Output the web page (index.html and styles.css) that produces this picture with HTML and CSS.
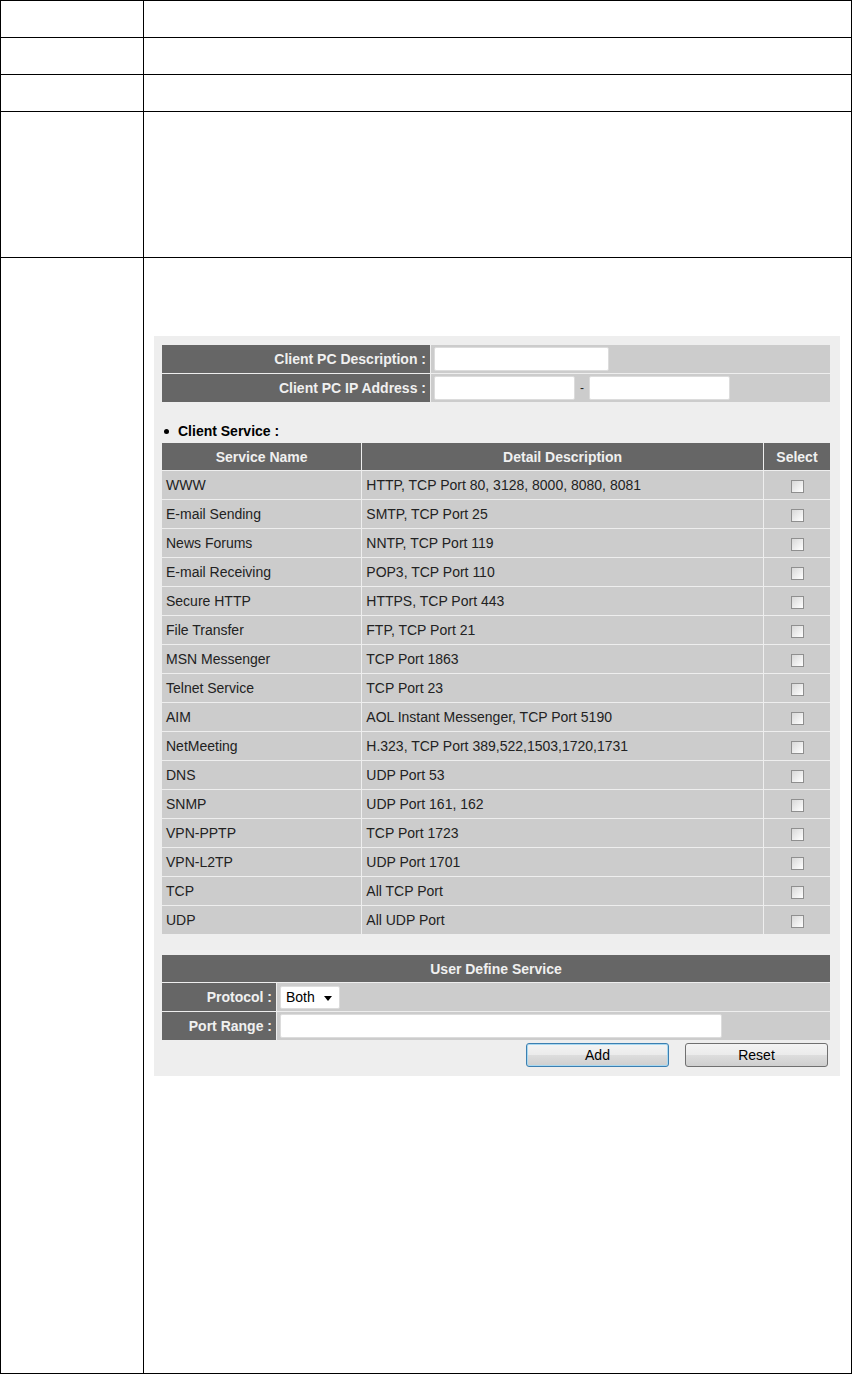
FILE: index.html
```html
<!DOCTYPE html>
<html lang="en">
  <head>
    <meta charset="UTF-8" />
    <title>Access Control</title>
    <link rel="stylesheet" href="styles.css">
  </head>
  <body>
    <table class="doc">
      <tr class="r1"><td class="key"></td><td></td></tr>
      <tr class="r2"><td class="key"></td><td></td></tr>
      <tr class="r3"><td class="key"></td><td></td></tr>
      <tr class="r4"><td class="key"></td><td></td></tr>
      <tr class="r5">
        <td class="key"></td>
        <td class="shot">
          <div class="panel">
            <!-- Client PC -->
            <table class="form top-form">
              <tr>
                <td class="label wide">Client PC Description :</td>
                <td class="value"><input type="text" class="txt desc" /></td>
              </tr>
              <tr>
                <td class="label wide">Client PC IP Address :</td>
                <td class="value">
                  <input type="text" class="txt ip" /><span class="dash">-</span><input type="text" class="txt ip" />
                </td>
              </tr>
            </table>

            <div class="section-title"><span class="dot"></span>Client Service :</div>

            <table class="form services">
              <thead>
                <tr>
                  <th class="c-name">Service Name</th>
                  <th class="c-desc">Detail Description</th>
                  <th class="c-sel">Select</th>
                </tr>
              </thead>
              <tbody>
                <tr><td>WWW</td><td>HTTP, TCP Port 80, 3128, 8000, 8080, 8081</td><td class="sel"><input type="checkbox" /></td></tr>
                <tr><td>E-mail Sending</td><td>SMTP, TCP Port 25</td><td class="sel"><input type="checkbox" /></td></tr>
                <tr><td>News Forums</td><td>NNTP, TCP Port 119</td><td class="sel"><input type="checkbox" /></td></tr>
                <tr><td>E-mail Receiving</td><td>POP3, TCP Port 110</td><td class="sel"><input type="checkbox" /></td></tr>
                <tr><td>Secure HTTP</td><td>HTTPS, TCP Port 443</td><td class="sel"><input type="checkbox" /></td></tr>
                <tr><td>File Transfer</td><td>FTP, TCP Port 21</td><td class="sel"><input type="checkbox" /></td></tr>
                <tr><td>MSN Messenger</td><td>TCP Port 1863</td><td class="sel"><input type="checkbox" /></td></tr>
                <tr><td>Telnet Service</td><td>TCP Port 23</td><td class="sel"><input type="checkbox" /></td></tr>
                <tr><td>AIM</td><td>AOL Instant Messenger, TCP Port 5190</td><td class="sel"><input type="checkbox" /></td></tr>
                <tr><td>NetMeeting</td><td>H.323, TCP Port 389,522,1503,1720,1731</td><td class="sel"><input type="checkbox" /></td></tr>
                <tr><td>DNS</td><td>UDP Port 53</td><td class="sel"><input type="checkbox" /></td></tr>
                <tr><td>SNMP</td><td>UDP Port 161, 162</td><td class="sel"><input type="checkbox" /></td></tr>
                <tr><td>VPN-PPTP</td><td>TCP Port 1723</td><td class="sel"><input type="checkbox" /></td></tr>
                <tr><td>VPN-L2TP</td><td>UDP Port 1701</td><td class="sel"><input type="checkbox" /></td></tr>
                <tr><td>TCP</td><td>All TCP Port</td><td class="sel"><input type="checkbox" /></td></tr>
                <tr><td>UDP</td><td>All UDP Port</td><td class="sel"><input type="checkbox" /></td></tr>
              </tbody>
            </table>

            <!-- User define -->
            <table class="form user-form">
              <tr><th colspan="2">User Define Service</th></tr>
              <tr>
                <td class="label narrow">Protocol :</td>
                <td class="value">
                  <span class="select">Both<span class="arrow"></span></span>
                </td>
              </tr>
              <tr>
                <td class="label narrow">Port Range :</td>
                <td class="value"><input type="text" class="txt range" /></td>
              </tr>
            </table>

            <div class="buttons">
              <button class="btn add">Add</button>
              <button class="btn">Reset</button>
            </div>
          </div>
        </td>
      </tr>
    </table>
  </body>
</html>
```

FILE: styles.css
```css
/* Page */
body {
  margin: 0;
  background-color: #fff;
  font-family: "Liberation Sans", Arial, sans-serif;
}

/* Outer document table */
.doc {
  width: 852px;
  border-collapse: collapse;
}

.doc td {
  border: 1px solid #000;
  padding: 0;
  vertical-align: top;
}

.doc .key {
  width: 142px;
}

.r1 td { height: 36px; }
.r2 td { height: 36px; }
.r3 td { height: 36px; }
.r4 td { height: 145px; }
.r5 td { height: 1037px; }

.doc td.shot {
  padding: 78px 0 0 10px;
}

/* Screenshot panel */
.panel {
  width: 668px;
  padding: 8px 11px 9px 7px;
  background-color: #eeeeee;
  font-size: 14px;
  color: #222;
}

.form {
  width: 670px;
  border-collapse: collapse;
}

.doc .form td,
.form th {
  border: 1px solid #eeeeee;
  height: auto;
  vertical-align: middle;
}

.form th {
  background-color: #666666;
  color: #f0f0f0;
  font-weight: bold;
  text-align: center;
  height: 27px;
  padding: 0;
}

.doc .form td.label {
  background-color: #666666;
  color: #f0f0f0;
  font-weight: bold;
  text-align: right;
  padding-right: 4px;
}

.label.wide {
  width: 264px;
}

.label.narrow {
  width: 110px;
}

.doc .form td.value {
  background-color: #cccccc;
  padding: 0 3px;
  height: 28px;
}

.txt {
  box-sizing: border-box;
  height: 24px;
  border: 1px solid #dcdcdc;
  border-radius: 2px;
  background-color: #fff;
  margin: 0;
  vertical-align: middle;
}

.txt.desc { width: 175px; }
.txt.ip { width: 141px; }
.txt.range { width: 442px; }

.dash {
  display: inline-block;
  width: 14px;
  text-align: center;
  font-size: 12px;
  vertical-align: middle;
}

/* Section title */
.section-title {
  margin: 19px 0 2px 1px;
  font-weight: bold;
  color: #000;
  line-height: 18px;
}

.dot {
  display: inline-block;
  width: 5px;
  height: 5px;
  border-radius: 50%;
  background-color: #000;
  margin: 0 9px 2px 2px;
  vertical-align: middle;
}

/* Service table */
.services .c-name { width: 199px; }
.services .c-desc { width: 400px; }
.services .c-sel { width: 66px; }

.doc .services td {
  background-color: #cccccc;
  height: 28px;
  padding: 0 4px;
}

.doc .services td.sel {
  text-align: center;
  padding: 0 0 0 2px;
}

.sel input {
  appearance: none;
  -webkit-appearance: none;
  box-sizing: border-box;
  width: 13px;
  height: 13px;
  margin: 1px 0 0;
  border: 1px solid #8f8f8f;
  background: linear-gradient(135deg, #d8d8d8, #ffffff);
  vertical-align: middle;
}

/* User define */
.user-form {
  margin-top: 19px;
}

.select {
  display: inline-block;
  box-sizing: border-box;
  width: 60px;
  height: 23px;
  line-height: 21px;
  padding-left: 5px;
  border: 1px solid #dcdcdc;
  border-radius: 2px;
  background-color: #fff;
  color: #000;
  vertical-align: middle;
  position: relative;
}

.arrow {
  position: absolute;
  right: 7px;
  top: 9px;
  border-left: 4px solid transparent;
  border-right: 4px solid transparent;
  border-top: 5px solid #000;
}

/* Buttons */
.buttons {
  display: flex;
  justify-content: flex-end;
  gap: 16px;
  margin-top: 2px;
  padding-right: 1px;
}

.btn {
  width: 143px;
  height: 24px;
  padding: 0;
  font-family: "Liberation Sans", Arial, sans-serif;
  font-size: 14px;
  color: #000;
  border: 1px solid #707070;
  border-radius: 3px;
  background: linear-gradient(#f4f4f4 0%, #ebebeb 50%, #dddddd 51%, #cfcfcf 100%);
}

.btn.add {
  border-color: #3c7fb1;
  box-shadow: inset 0 0 0 1px #a8d8f0;
}
```
